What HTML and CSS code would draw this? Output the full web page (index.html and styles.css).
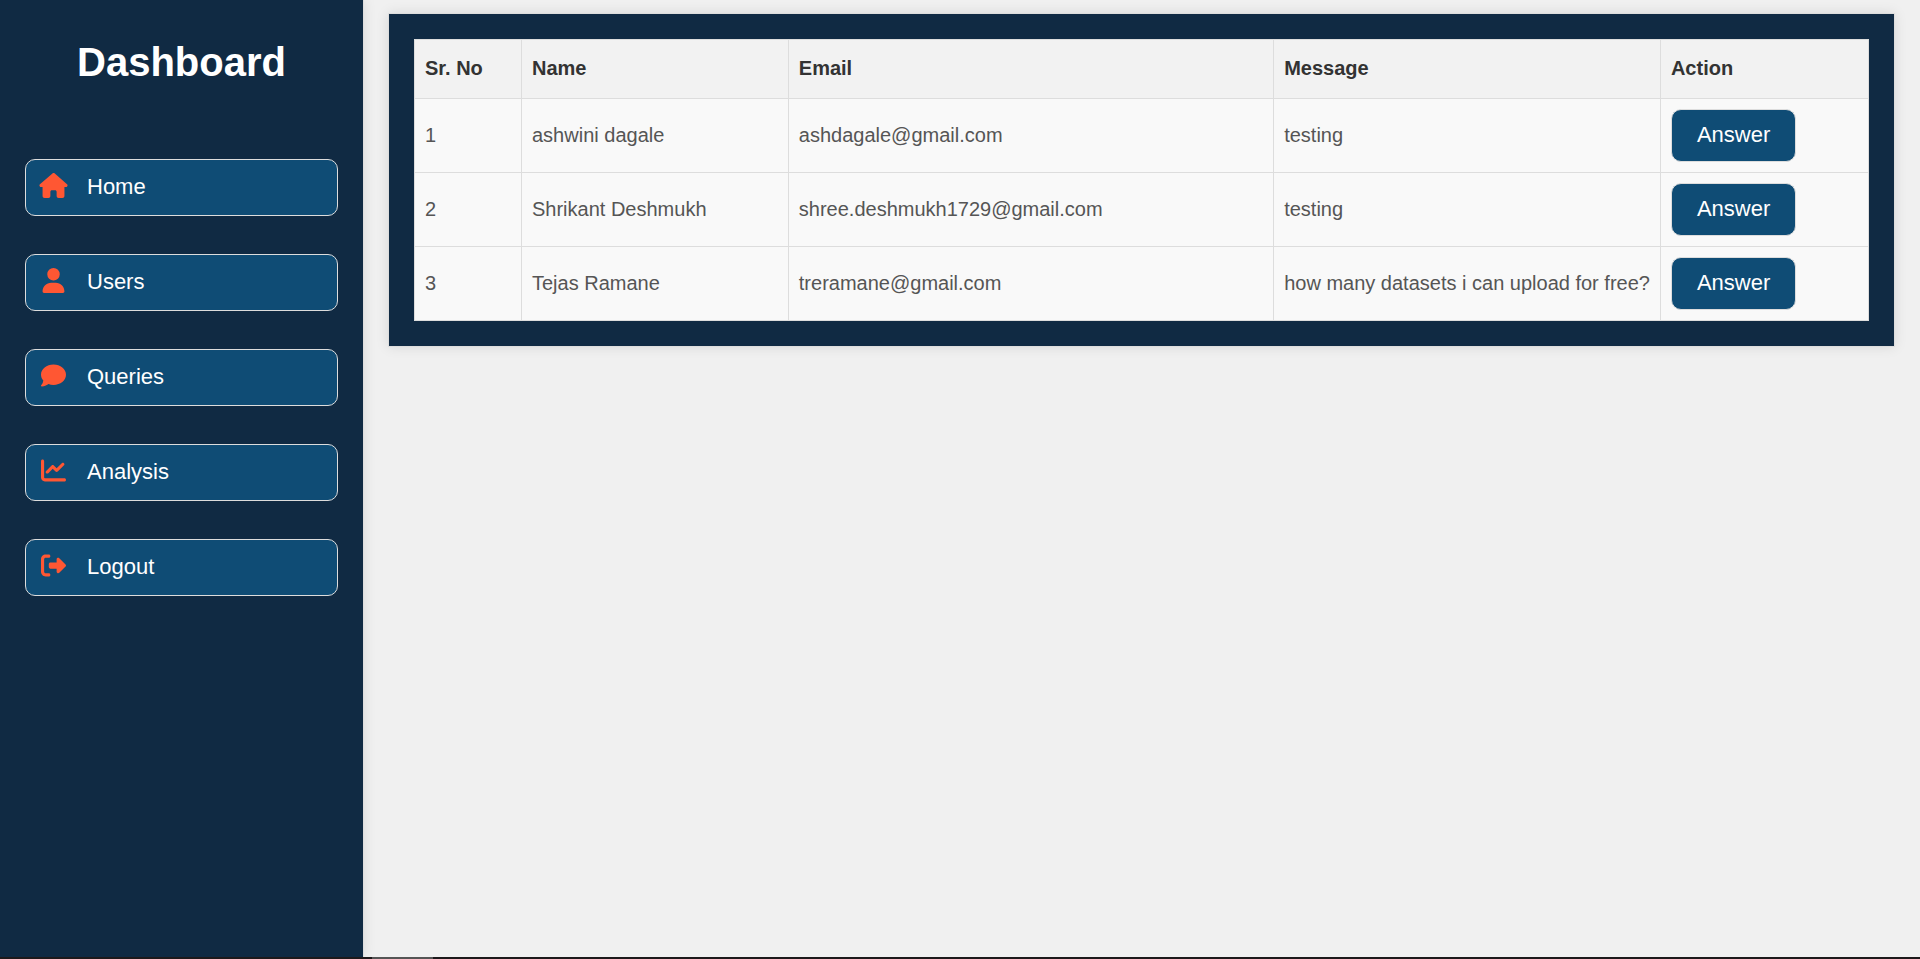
FILE: index.html
```html
<!DOCTYPE html>
<html lang="en">
<head>
<meta charset="utf-8">
<title>Dashboard</title>
<link rel="stylesheet" href="styles.css">
</head>
<body>
<div class="layout">
  <aside class="sidebar">
    <h1 class="sidebar-title">Dashboard</h1>
    <nav class="menu">
      <a class="menu-link" href="#home">
        <svg class="menu-icon" viewBox="0 0 576 512" aria-hidden="true"><path d="M575.800 255.500c0 18-15 32.100-32 32.100h-32l.7 160.200c0 2.700-.2 5.400-.5 8.100V472c0 22.100-17.900 40-40 40H456c-1.100 0-2.200 0-3.300-.1c-1.400 .1-2.800 .1-4.200 .1H416 392c-22.100 0-40-17.900-40-40V448 384c0-17.700-14.300-32-32-32H256c-17.700 0-32 14.300-32 32v64 24c0 22.100-17.900 40-40 40H160 128.100c-1.500 0-3-.1-4.500-.2c-1.200 .1-2.400 .2-3.600 .2H104c-22.100 0-40-17.900-40-40V360c0-.9 0-1.900 .1-2.800V287.600H32c-18 0-32-14-32-32.100c0-9 3-17 10-24L266.400 8c7-7 15-8 22-8s15 2 21 7L564.800 231.500c8 7 12 15 11 24z"/></svg>
        <span>Home</span>
      </a>
      <a class="menu-link" href="#users">
        <svg class="menu-icon" viewBox="0 0 448 512" aria-hidden="true"><path d="M224 256A128 128 0 1 0 224 0a128 128 0 1 0 0 256zm-45.700 48C79.800 304 0 383.800 0 482.300C0 498.700 13.300 512 29.700 512H418.300c16.400 0 29.700-13.300 29.700-29.700C448 383.800 368.200 304 269.700 304H178.300z"/></svg>
        <span>Users</span>
      </a>
      <a class="menu-link" href="#queries">
        <svg class="menu-icon" viewBox="0 0 512 512" aria-hidden="true"><path d="M512 240c0 114.900-114.600 208-256 208c-37.100 0-72.300-6.400-104.100-17.900c-11.900 8.700-31.300 20.600-54.300 30.600C73.600 471.100 44.700 480 16 480c-6.500 0-12.300-3.900-14.800-9.900c-2.500-6-1.100-12.800 3.400-17.400l.3-.3c.3-.3 .7-.7 1.300-1.400c1.100-1.200 2.800-3.100 4.900-5.700c4.100-5 9.600-12.400 15.200-21.600c10-16.600 19.500-38.400 21.400-62.900C17.700 326.800 0 285.100 0 240C0 125.100 114.600 32 256 32s256 93.100 256 208z"/></svg>
        <span>Queries</span>
      </a>
      <a class="menu-link" href="#analysis">
        <svg class="menu-icon" viewBox="0 0 512 512" aria-hidden="true"><path d="M64 64c0-17.700-14.300-32-32-32S0 46.300 0 64V400c0 44.200 35.800 80 80 80H480c17.700 0 32-14.300 32-32s-14.300-32-32-32H80c-8.800 0-16-7.200-16-16V64zm406.600 86.600c12.500-12.500 12.500-32.800 0-45.300s-32.800-12.500-45.300 0L320 210.700l-57.400-57.400c-12.500-12.500-32.800-12.500-45.300 0l-112 112c-12.500 12.500-12.500 32.800 0 45.300s32.800 12.500 45.300 0L240 221.300l57.400 57.400c12.500 12.500 32.800 12.500 45.300 0l128-128z"/></svg>
        <span>Analysis</span>
      </a>
      <a class="menu-link" href="#logout">
        <svg class="menu-icon" viewBox="0 0 512 512" aria-hidden="true"><path d="M502.600 278.600c12.500-12.500 12.500-32.800 0-45.300l-128-128c-9.200-9.200-22.900-11.900-34.900-6.900s-19.800 16.600-19.800 29.600l0 64-128 0c-17.700 0-32 14.300-32 32l0 64c0 17.700 14.300 32 32 32l128 0 0 64c0 12.900 7.800 24.600 19.800 29.600s25.700 2.200 34.900-6.900l128-128zM160 96c17.700 0 32-14.300 32-32s-14.300-32-32-32L96 32C43 32 0 75 0 128L0 384c0 53 43 96 96 96l64 0c17.700 0 32-14.300 32-32s-14.300-32-32-32l-64 0c-17.700 0-32-14.300-32-32l0-256c0-17.700 14.300-32 32-32l64 0z"/></svg>
        <span>Logout</span>
      </a>
    </nav>
  </aside>
  <main class="content">
    <section class="card">
      <table class="queries">
        <colgroup>
          <col class="col-number"><col class="col-name"><col class="col-email"><col class="col-message"><col>
        </colgroup>
        <thead>
          <tr><th>Sr. No</th><th>Name</th><th>Email</th><th>Message</th><th>Action</th></tr>
        </thead>
        <tbody>
          <tr><td>1</td><td>ashwini dagale</td><td>ashdagale@gmail.com</td><td>testing</td><td><button class="answer" type="button">Answer</button></td></tr>
          <tr><td>2</td><td>Shrikant Deshmukh</td><td>shree.deshmukh1729@gmail.com</td><td>testing</td><td><button class="answer" type="button">Answer</button></td></tr>
          <tr><td>3</td><td>Tejas Ramane</td><td>treramane@gmail.com</td><td>how many datasets i can upload for free?</td><td><button class="answer" type="button">Answer</button></td></tr>
        </tbody>
      </table>
    </section>
  </main>
</div>
<footer class="bottom-bar"><div class="bottom-bar-thumb"></div></footer>
</body>
</html>
```
FILE: styles.css
```css
* {
  box-sizing: border-box;
}

body {
  display: flex;
  flex-direction: column;
  min-height: 100vh;
  margin: 0;
  background: #f0f0f0;
  font-family: "Liberation Sans", Arial, sans-serif;
  font-size: 20px;
}

.layout {
  display: flex;
  flex: 1;
}

.sidebar {
  flex: 0 0 364px;
  padding: 38px 25px;
  border-right: 1px solid #ddd;
  background: #102a43;
  box-shadow: 0 0 12px rgba(0, 0, 0, 0.1);
}

.sidebar-title {
  margin: 0 0 73px;
  color: #fff;
  font-size: 40px;
  line-height: 48px;
  text-align: center;
}

.menu {
  display: flex;
  flex-direction: column;
  gap: 38px;
}

.menu-link {
  display: flex;
  gap: 18px;
  padding: 13px 12px 14px;
  border: 1px solid #ddd;
  border-radius: 10px;
  background: #0f4c75;
  color: #fff;
  font-size: 22px;
  line-height: 28px;
  text-decoration: none;
}

.menu-icon {
  width: 31px;
  height: 25px;
  fill: #ff5733;
}

.content {
  flex: 1;
  min-width: 0;
  padding: 13px 25px 25px 24px;
}

.card {
  padding: 25px;
  border: 1px solid #ddd;
  background: #102a43;
  box-shadow: 0 0 12px rgba(0, 0, 0, 0.1);
}

.queries {
  width: 100%;
  border-collapse: collapse;
  background: #f9f9f9;
  color: #555;
  white-space: nowrap;
}

.queries th,
.queries td {
  padding: 10px;
  border: 1px solid #ddd;
  text-align: left;
}

.queries th {
  padding: 9px 10px 11px;
  background: #f2f2f2;
  color: #333;
  line-height: 38px;
}

.col-number {
  width: 7.36%;
}

.col-name {
  width: 18.35%;
}

.col-email {
  width: 33.38%;
}

.col-message {
  width: 26.55%;
}

.answer {
  display: block;
  padding: 11px 25px 13px;
  border: 1px solid #ddd;
  border-radius: 10px;
  background: #0f4c75;
  color: #fff;
  font-family: inherit;
  font-size: 22px;
  line-height: 27px;
}

.bottom-bar {
  height: 2px;
  padding-left: 372px;
  background: #1d191b;
}

.bottom-bar-thumb {
  width: 61px;
  height: 2px;
  background: #555;
}
```
